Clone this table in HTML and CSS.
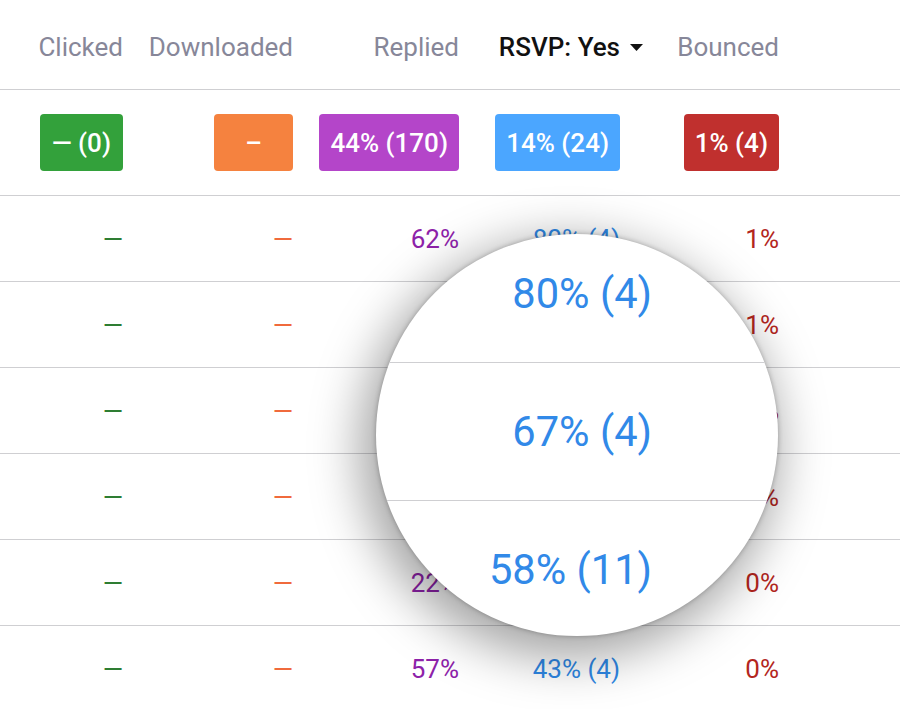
FILE: index.html
```html
<!DOCTYPE html>
<html>
<head>
<meta charset="utf-8">
<link rel="stylesheet" href="styles.css">
</head>
<body>
<div class="page">
  <div class="table">
    <div class="row head">
      <div class="cell"><span class="th">Clicked</span></div>
      <div class="cell"><span class="th">Downloaded</span></div>
      <div class="cell"><span class="th">Replied</span></div>
      <div class="cell"><span class="th active">RSVP: Yes<svg class="caret" width="13" height="7" viewBox="0 0 13 7"><path d="M0 0H13L6.5 7Z" fill="#111"/></svg></span></div>
      <div class="cell"><span class="th">Bounced</span></div>
    </div>
    <div class="row totals">
      <div class="cell"><span class="badge green">— (0)</span></div>
      <div class="cell"><span class="badge orange dl">–</span></div>
      <div class="cell"><span class="badge purple">44% (170)</span></div>
      <div class="cell"><span class="badge blue">14% (24)</span></div>
      <div class="cell"><span class="badge red">1% (4)</span></div>
    </div>
    <div class="row data">
      <div class="cell t-green">—</div><div class="cell t-orange">—</div><div class="cell t-purple">62%</div><div class="cell t-blue">80% (4)</div><div class="cell t-red">1%</div>
    </div>
    <div class="row data">
      <div class="cell t-green">—</div><div class="cell t-orange">—</div><div class="cell t-purple">48%</div><div class="cell t-blue">67% (4)</div><div class="cell t-red">1%</div>
    </div>
    <div class="row data">
      <div class="cell t-green">—</div><div class="cell t-orange">—</div><div class="cell t-purple">40%</div><div class="cell t-blue">58% (11)</div><div class="cell t-red">1%</div>
    </div>
    <div class="row data">
      <div class="cell t-green">—</div><div class="cell t-orange">—</div><div class="cell t-purple">35%</div><div class="cell t-blue">30% (3)</div><div class="cell t-red">0%</div>
    </div>
    <div class="row data">
      <div class="cell t-green">—</div><div class="cell t-orange">—</div><div class="cell t-purple">22%</div><div class="cell t-blue">25% (2)</div><div class="cell t-red">0%</div>
    </div>
    <div class="row data last">
      <div class="cell t-green">—</div><div class="cell t-orange">—</div><div class="cell t-purple">57%</div><div class="cell t-blue">43% (4)</div><div class="cell t-red">0%</div>
    </div>
  </div>

  <div class="magnifier">
    <div class="mag-rows">
      <div class="mag-row">80% (4)</div>
      <div class="mag-row">67% (4)</div>
      <div class="mag-row">58% (11)</div>
    </div>
  </div>
</div>
</body>
</html>
```
FILE: styles.css
```css
html, body {
  margin: 0;
  padding: 0;
  background: #fff;
}
body {
  font-family: Roboto, "Liberation Sans", sans-serif;
  font-size: 26px;
}
.page {
  position: relative;
  width: 900px;
  height: 709px;
  overflow: hidden;
}
.table {
  display: flex;
  flex-direction: column;
}
.row {
  display: grid;
  grid-template-columns: 123px 170px 166px 161px 159px 1fr;
  align-items: center;
  border-bottom: 1px solid #cfcfd2;
}
.cell {
  display: flex;
  justify-content: flex-end;
  white-space: nowrap;
}
.head {
  height: 89px;
}
.th {
  color: #878799;
  font-size: 26px;
  padding-top: 4px;
}
.th.active {
  color: #111;
  font-weight: 500;
  margin-right: -23px;
  display: flex;
  align-items: center;
}
.caret {
  margin-left: 10px;
  margin-top: 1px;
}
.totals {
  height: 105px;
}
.badge {
  display: flex;
  align-items: center;
  justify-content: center;
  height: 57px;
  padding: 0 11px;
  border-radius: 4px;
  color: #fff;
  font-weight: 500;
  font-size: 26px;
}
.badge.dl {
  width: 79px;
  padding: 0;
  box-sizing: border-box;
}
.green { background: #33a13b; padding: 0 12px; }
.orange { background: #f5823f; }
.purple { background: #b445c9; }
.blue { background: #4ba6ff; }
.red { background: #c0302e; }

.data {
  height: 85px;
}
.data.last {
  border-bottom: none;
}
.t-green { color: #2e7d32; }
.t-orange { color: #f06a3c; }
.t-purple { color: #8e22aa; }
.t-blue { color: #2f88e5; }
.t-red { color: #b3261e; }

.magnifier {
  position: absolute;
  left: 376px;
  top: 234px;
  width: 402px;
  height: 402px;
  border-radius: 50%;
  background: #fff;
  overflow: hidden;
  box-shadow: 0 0 5px rgba(0, 0, 0, 0.28), -8px 14px 50px 8px rgba(0, 0, 0, 0.36);
}
.mag-rows {
  display: flex;
  flex-direction: column;
  margin-top: -9px;
}
.mag-row {
  height: 137px;
  border-bottom: 1px solid #cfcfd2;
  display: flex;
  align-items: center;
  justify-content: flex-end;
  padding-right: 126px;
  color: #3189e8;
  font-size: 41.6px;
}
```
